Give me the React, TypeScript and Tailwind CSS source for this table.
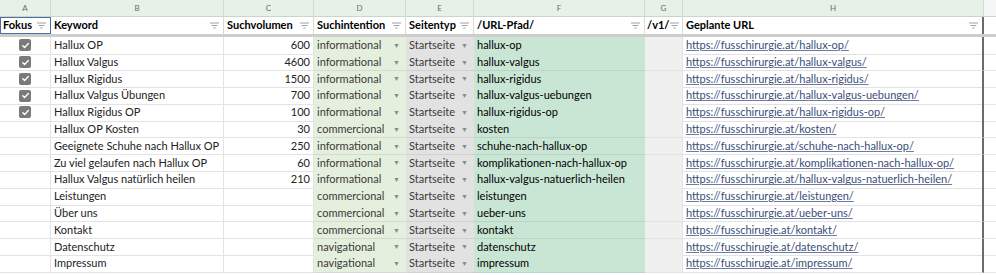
import React from 'react';

type Row = {
  fokus: boolean;
  keyword: string;
  volume?: number;
  intent: string;
  slug: string;
  url: string;
};

const rows: Row[] = [
  { fokus: true, keyword: 'Hallux OP', volume: 600, intent: 'informational', slug: 'hallux-op', url: 'https://fusschirurgie.at/hallux-op/' },
  { fokus: true, keyword: 'Hallux Valgus', volume: 4600, intent: 'informational', slug: 'hallux-valgus', url: 'https://fusschirurgie.at/hallux-valgus/' },
  { fokus: true, keyword: 'Hallux Rigidus', volume: 1500, intent: 'informational', slug: 'hallux-rigidus', url: 'https://fusschirurgie.at/hallux-rigidus/' },
  { fokus: true, keyword: 'Hallux Valgus Übungen', volume: 700, intent: 'informational', slug: 'hallux-valgus-uebungen', url: 'https://fusschirurgie.at/hallux-valgus-uebungen/' },
  { fokus: true, keyword: 'Hallux Rigidus OP', volume: 100, intent: 'informational', slug: 'hallux-rigidus-op', url: 'https://fusschirurgie.at/hallux-rigidus-op/' },
  { fokus: false, keyword: 'Hallux OP Kosten', volume: 30, intent: 'commercional', slug: 'kosten', url: 'https://fusschirurgie.at/kosten/' },
  { fokus: false, keyword: 'Geeignete Schuhe nach Hallux OP', volume: 250, intent: 'informational', slug: 'schuhe-nach-hallux-op', url: 'https://fusschirurgie.at/schuhe-nach-hallux-op/' },
  { fokus: false, keyword: 'Zu viel gelaufen nach Hallux OP', volume: 60, intent: 'informational', slug: 'komplikationen-nach-hallux-op', url: 'https://fusschirurgie.at/komplikationen-nach-hallux-op/' },
  { fokus: false, keyword: 'Hallux Valgus natürlich heilen', volume: 210, intent: 'informational', slug: 'hallux-valgus-natuerlich-heilen', url: 'https://fusschirurgie.at/hallux-valgus-natuerlich-heilen/' },
  { fokus: false, keyword: 'Leistungen', intent: 'commercional', slug: 'leistungen', url: 'https://fusschirurgie.at/leistungen/' },
  { fokus: false, keyword: 'Über uns', intent: 'commercional', slug: 'ueber-uns', url: 'https://fusschirurgie.at/ueber-uns/' },
  { fokus: false, keyword: 'Kontakt', intent: 'commercional', slug: 'kontakt', url: 'https://fusschirugie.at/kontakt/' },
  { fokus: false, keyword: 'Datenschutz', intent: 'navigational', slug: 'datenschutz', url: 'https://fusschirugie.at/datenschutz/' },
  { fokus: false, keyword: 'Impressum', intent: 'navigational', slug: 'impressum', url: 'https://fusschirugie.at/impressum/' },
];

const cols = 'grid grid-cols-[51px_173px_90px_92px_68px_171px_38px_301px_12px]';
const letters = ['A', 'B', 'C', 'D', 'E', 'F', 'G', 'H'];

const FilterIcon = () => (
  <svg width="9" height="7" viewBox="0 0 9 7" className="shrink-0 text-[#a0a0a0]">
    <path d="M0 1h9M1.6 3.5h5.8M3.3 6h2.4" stroke="currentColor" strokeWidth="1" fill="none" />
  </svg>
);

const Check = () => (
  <div className="w-[12px] h-[12px] rounded-[2px] bg-[#7a7a7a] flex items-center justify-center">
    <svg width="9" height="9" viewBox="0 0 10 10">
      <path d="M2 5.2l2 2L8.2 2.8" stroke="white" strokeWidth="1.5" fill="none" strokeLinecap="round" strokeLinejoin="round" />
    </svg>
  </div>
);

const Caret = () => <span className="text-[7px] text-[#8a8a8a] leading-none">▼</span>;

const HeaderCell = ({ label, selected, tight }: { label: string; selected?: boolean; tight?: boolean }) => (
  <div
    className={`h-[17px] flex items-center justify-between border-r border-[#d9d9d9] ${tight ? 'pl-[2px] pr-[3px]' : 'pl-[3px] pr-[4px]'} ${
      selected ? 'outline outline-[1.5px] -outline-offset-[1.5px] outline-[#4a6fa5]' : ''
    }`}
  >
    <span className="font-bold text-[11px] text-black whitespace-nowrap">{label}</span>
    <FilterIcon />
  </div>
);

export default function App() {
  return (
    <div className="w-[996px] h-[275px] overflow-hidden bg-white text-[11px] text-[#222]" style={{ fontFamily: 'Lato, "Open Sans", sans-serif' }}>
      {/* Column letters */}
      <div className={`${cols} h-[17px] bg-[#e6f1e7] border-b border-[#c9d6ca]`}>
        {letters.map((l) => (
          <div key={l} className="flex items-center justify-center text-[8px] text-[#6b6b6b] border-r border-[#cfdcd0]">
            {l}
          </div>
        ))}
        <div className="bg-[#f7f7f7]" />
      </div>

      {/* Header row */}
      <div className={`${cols} border-b-[3px] border-[#cdcdcd]`}>
        <HeaderCell label="Fokus" selected />
        <HeaderCell label="Keyword" />
        <HeaderCell label="Suchvolumen" />
        <HeaderCell label="Suchintention" />
        <HeaderCell label="Seitentyp" />
        <HeaderCell label="/URL-Pfad/" />
        <HeaderCell label="/v1/" tight />
        <div className="h-[17px] flex items-center justify-between pl-[3px] pr-[4px] border-r-2 border-[#6b6b6b]">
          <span className="font-bold text-[11px] text-black">Geplante URL</span>
          <FilterIcon />
        </div>
        <div />
      </div>

      {/* Data rows */}
      {rows.map((r) => (
        <div key={r.keyword} className={`${cols} h-[16.8px]`}>
          <div className="flex items-center justify-center border-r border-b border-[#e3e3e3]">
            {r.fokus && <Check />}
          </div>
          <div className="flex items-center px-[3px] border-r border-b border-[#e3e3e3] truncate">{r.keyword}</div>
          <div className="flex items-center justify-end px-[3px] border-r border-b border-[#e3e3e3]">
            {r.volume ?? ''}
          </div>
          <div className="flex items-center justify-between pl-[3px] pr-[6px] bg-[#e5efdd] text-[#3a3a3a] border-b border-[#d4dccd]">
            <span>{r.intent}</span>
            <Caret />
          </div>
          <div className="flex items-center justify-between pl-[3px] pr-[6px] bg-[#e2e2e2] text-[#3a3a3a] border-b border-[#d2d2d2]">
            <span>Startseite</span>
            <Caret />
          </div>
          <div className="flex items-center px-[3px] bg-[#c9e6d5] text-black border-b border-[#b9d6c5] truncate">{r.slug}</div>
          <div className="bg-[#f0f0f0] border-r border-b border-[#e3e3e3]" />
          <div className="flex items-center px-[3px] border-r-2 border-r-[#6b6b6b] border-b border-b-[#e3e3e3] truncate">
            <a href="#" className="underline text-[#3b4d78] decoration-[#6d7ba0]">
              {r.url}
            </a>
          </div>
          <div className="border-b border-[#e6e6e6]" />
        </div>
      ))}
    </div>
  );
}
